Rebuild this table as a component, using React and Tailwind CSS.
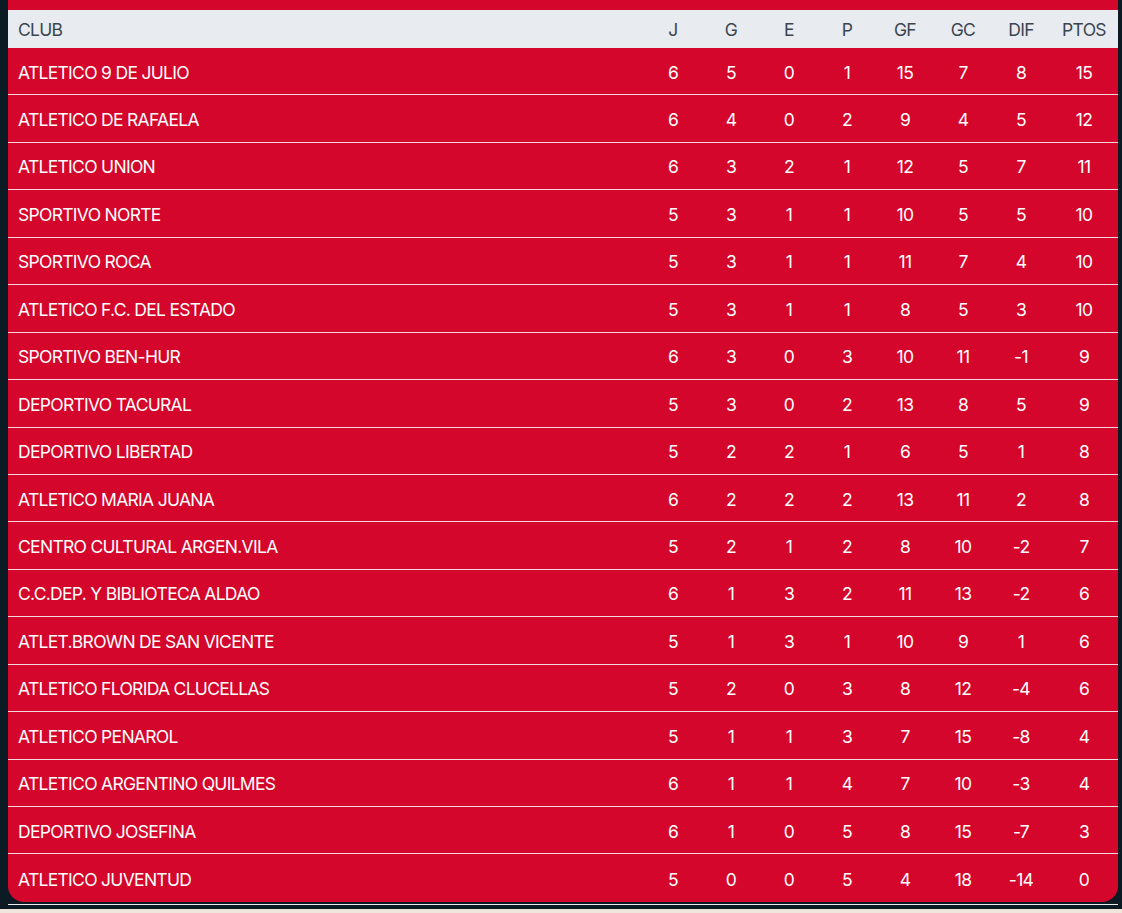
import React from "react";

const rows = [
  ["ATLETICO 9 DE JULIO", 6, 5, 0, 1, 15, 7, 8, 15],
  ["ATLETICO DE RAFAELA", 6, 4, 0, 2, 9, 4, 5, 12],
  ["ATLETICO UNION", 6, 3, 2, 1, 12, 5, 7, 11],
  ["SPORTIVO NORTE", 5, 3, 1, 1, 10, 5, 5, 10],
  ["SPORTIVO ROCA", 5, 3, 1, 1, 11, 7, 4, 10],
  ["ATLETICO F.C. DEL ESTADO", 5, 3, 1, 1, 8, 5, 3, 10],
  ["SPORTIVO BEN-HUR", 6, 3, 0, 3, 10, 11, -1, 9],
  ["DEPORTIVO TACURAL", 5, 3, 0, 2, 13, 8, 5, 9],
  ["DEPORTIVO LIBERTAD", 5, 2, 2, 1, 6, 5, 1, 8],
  ["ATLETICO MARIA JUANA", 6, 2, 2, 2, 13, 11, 2, 8],
  ["CENTRO CULTURAL ARGEN.VILA", 5, 2, 1, 2, 8, 10, -2, 7],
  ["C.C.DEP. Y BIBLIOTECA ALDAO", 6, 1, 3, 2, 11, 13, -2, 6],
  ["ATLET.BROWN DE SAN VICENTE", 5, 1, 3, 1, 10, 9, 1, 6],
  ["ATLETICO FLORIDA CLUCELLAS", 5, 2, 0, 3, 8, 12, -4, 6],
  ["ATLETICO PENAROL", 5, 1, 1, 3, 7, 15, -8, 4],
  ["ATLETICO ARGENTINO QUILMES", 6, 1, 1, 4, 7, 10, -3, 4],
  ["DEPORTIVO JOSEFINA", 6, 1, 0, 5, 8, 15, -7, 3],
  ["ATLETICO JUVENTUD", 5, 0, 0, 5, 4, 18, -14, 0],
];

const heads = ["J", "G", "E", "P", "GF", "GC", "DIF"];

export default function App() {
  return (
    <div
      className="w-[1122px] h-[913px] overflow-hidden bg-[#f1e6dc] flex flex-col"
      style={{ fontFamily: "Inter, 'Liberation Sans', sans-serif" }}
    >
      <div className="bg-[#0c1a24] flex flex-col pl-[8px] pr-[4px] pb-[4px]">
        <div className="bg-[#d4062b] rounded-b-[16px] pt-[10px] overflow-hidden">
          <div className="flex h-[38px] items-center pt-[3px] bg-[#e8ebef] text-[#3b4550] text-[17.5px] tracking-[-0.7px]">
            <div className="flex-1 pl-[10px]">CLUB</div>
            {heads.map((h) => (
              <div key={h} className="w-[58px] text-center">
                {h}
              </div>
            ))}
            <div className="w-[68px] text-center">PTOS</div>
          </div>
          {rows.map((r, i) => (
            <div
              key={r[0]}
              className={
                "flex h-[47.45px] items-center pt-[3px] text-white text-[17.5px] tracking-[-0.7px] " +
                (i < rows.length - 1 ? "border-b border-[#f3d7dc]" : "")
              }
            >
              <div className="flex-1 pl-[10px]">{r[0]}</div>
              {r.slice(1, 8).map((v, j) => (
                <div key={j} className="w-[58px] text-center">
                  {v}
                </div>
              ))}
              <div className="w-[68px] text-center">{r[8]}</div>
            </div>
          ))}
        </div>
        <div className="h-[1px] mt-[2px] bg-[#e8ecf0]" />
      </div>
    </div>
  );
}
